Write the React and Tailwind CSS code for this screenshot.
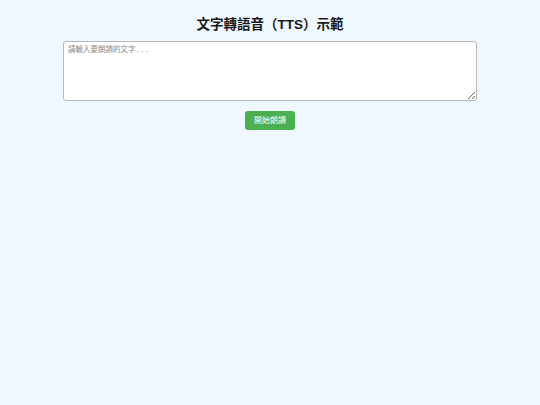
export default function App() {
  return (
    <div
      className="min-h-[405px] w-full bg-[#f0f8ff] flex flex-col items-center pt-[16px]"
      style={{ fontFamily: '"Liberation Sans", Arial, "Noto Sans CJK TC", sans-serif' }}
    >
      <h1 className="text-[13.5px] leading-[18px] font-bold text-[#1a1a1a]">文字轉語音（TTS）示範</h1>
      <textarea
        className="mt-[7px] w-[414px] h-[60px] bg-white border border-[#b8b8b8] rounded-[3px] px-[4px] py-[3px] text-[7.5px] leading-[11px] text-[#333] placeholder:text-[#8a8a8a] outline-none"
        style={{ fontFamily: '"Liberation Mono", "Courier New", "Noto Sans CJK TC", monospace' }}
        placeholder="請輸入要朗讀的文字..."
      />
      <button className="mt-[10px] h-[19px] px-[9px] bg-[#4caf50] text-white text-[8px] rounded-[3px]">
        開始朗讀
      </button>
    </div>
  );
}
